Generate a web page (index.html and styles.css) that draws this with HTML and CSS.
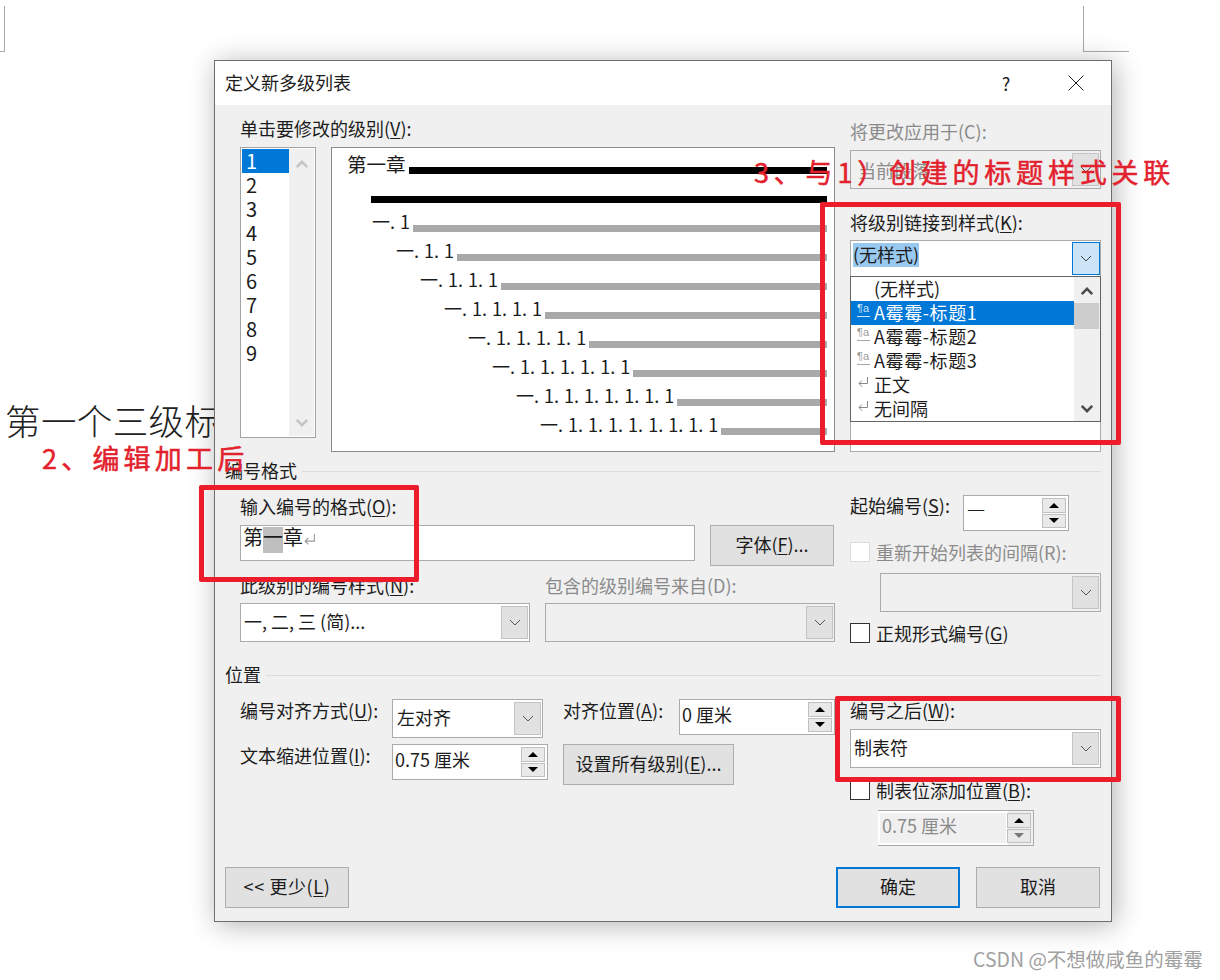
FILE: index.html
```html
<!DOCTYPE html>
<html lang="zh-CN">
<head>
<meta charset="utf-8">
<title>定义新多级列表</title>
<link rel="stylesheet" href="styles.css">
</head>
<body>
<svg class="defs" width="0" height="0" aria-hidden="true">
  <symbol id="chev" viewBox="0 0 12 7"><path d="M1 1l5 5 5-5" fill="none" stroke="currentColor" stroke-width="1"/></symbol>
  <symbol id="chevb" viewBox="0 0 16 10"><path d="M2 8l6-6 6 6" fill="none" stroke="currentColor" stroke-width="3"/></symbol>
  <symbol id="ret" viewBox="0 0 12 12"><path d="M10.5 1v6.500H2M5 4.500L2 7.500l3 3" fill="none" stroke="currentColor" stroke-width="1"/></symbol>
</svg>

<main class="desk">
  <div class="mark mark-left"></div>
  <div class="mark mark-right"></div>
  <p class="doc-text">第一个三级标题</p>

  <section class="dialog">
    <header class="titlebar">
      <h1 class="title">定义新多级列表</h1>
      <span class="help">?</span>
      <svg class="close" viewBox="0 0 16 16"><path d="M.5.500l15 15M15.500.500l-15 15" stroke="#222" stroke-width="1" fill="none"/></svg>
    </header>

    <div class="body">
      <div class="cols top">
        <div class="col-a">
          <label class="lbl lbl-levels">单击要修改的级别(<u>V</u>):</label>
          <div class="levels">
            <div class="listbox">
              <ul class="nums">
                <li class="sel">1</li><li>2</li><li>3</li><li>4</li><li>5</li><li>6</li><li>7</li><li>8</li><li>9</li>
              </ul>
              <div class="lb-scroll">
                <svg class="sb-ar"><use href="#chevb"/></svg>
                <svg class="sb-ar"><use href="#chevb"/></svg>
              </div>
            </div>
            <div class="preview">
              <div class="pv lv1"><span class="num">第一章</span><i class="bar black"></i></div>
              <div class="pv lv2"><span class="num"></span><i class="bar black"></i></div>
              <div class="pv lv3"><span class="num">一. 1</span><i class="bar"></i></div>
              <div class="pv lv4"><span class="num">一. 1. 1</span><i class="bar"></i></div>
              <div class="pv lv5"><span class="num">一. 1. 1. 1</span><i class="bar"></i></div>
              <div class="pv lv6"><span class="num">一. 1. 1. 1. 1</span><i class="bar"></i></div>
              <div class="pv lv7"><span class="num">一. 1. 1. 1. 1. 1</span><i class="bar"></i></div>
              <div class="pv lv8"><span class="num">一. 1. 1. 1. 1. 1. 1</span><i class="bar"></i></div>
              <div class="pv lv9"><span class="num">一. 1. 1. 1. 1. 1. 1. 1</span><i class="bar"></i></div>
              <div class="pv lv10"><span class="num">一. 1. 1. 1. 1. 1. 1. 1. 1</span><i class="bar"></i></div>
            </div>
          </div>
        </div>
        <div class="col-b">
          <label class="lbl off lbl-apply">将更改应用于(C):</label>
          <div class="combo disabled apply">
            <span class="c-text off">当前段落</span>
            <span class="c-btn"><svg class="chev"><use href="#chev"/></svg></span>
          </div>
          <label class="lbl lbl-link">将级别链接到样式(<u>K</u>):</label>
          <div class="linkbox">
            <div class="combo open">
              <span class="c-text"><span class="hl">(无样式)</span></span>
              <span class="c-btn"><svg class="chev"><use href="#chev"/></svg></span>
            </div>
            <div class="under"></div>
            <div class="dropdown">
              <ul class="styles">
                <li><span class="ic"></span>(无样式)</li>
                <li class="sel st"><span class="ic"><span class="pa">¶a</span></span>A霉霉-标题1</li>
                <li class="st"><span class="ic"><span class="pa">¶a</span></span>A霉霉-标题2</li>
                <li class="st"><span class="ic"><span class="pa">¶a</span></span>A霉霉-标题3</li>
                <li><span class="ic"><svg class="ret"><use href="#ret"/></svg></span>正文</li>
                <li><span class="ic"><svg class="ret"><use href="#ret"/></svg></span>无间隔</li>
              </ul>
              <div class="dd-scroll">
                <svg class="dd-ar"><use href="#chevb"/></svg>
                <span class="thumb"></span>
                <svg class="dd-ar down"><use href="#chevb"/></svg>
              </div>
            </div>
          </div>
        </div>
      </div>

      <div class="group"><span>编号格式</span><i></i></div>

      <div class="cols fmt">
        <div class="col-a">
          <label class="lbl lbl-fmt">输入编号的格式(<u>O</u>):</label>
          <div class="fmt-row">
            <div class="input"><span>第</span><span class="field">一</span><span>章</span><svg class="ret in"><use href="#ret"/></svg></div>
            <button class="btn btn-font">字体(<u>F</u>)...</button>
          </div>
          <div class="two">
            <div>
              <label class="lbl">此级别的编号样式(<u>N</u>):</label>
              <div class="combo"><span class="c-text">一, 二, 三 (简)...</span><span class="c-btn"><svg class="chev"><use href="#chev"/></svg></span></div>
            </div>
            <div>
              <label class="lbl off">包含的级别编号来自(D):</label>
              <div class="combo disabled"><span class="c-text"></span><span class="c-btn"><svg class="chev"><use href="#chev"/></svg></span></div>
            </div>
          </div>
        </div>
        <div class="col-b">
          <div class="start-row">
            <label class="lbl">起始编号(<u>S</u>):</label>
            <div class="spin w-start"><span class="s-text thin">一</span><span class="s-btns"><b class="up"></b><b class="dn"></b></span></div>
          </div>
          <div class="check check-off"><span class="box"></span><span class="off">重新开始列表的间隔(R):</span></div>
          <div class="combo disabled restart"><span class="c-text"></span><span class="c-btn"><svg class="chev"><use href="#chev"/></svg></span></div>
          <div class="check legal"><span class="box"></span><span>正规形式编号(<u>G</u>)</span></div>
        </div>
      </div>

      <div class="group pos"><span>位置</span><i></i></div>

      <div class="cols posn">
        <div class="col-a pos-grid">
          <label class="lbl">编号对齐方式(<u>U</u>):</label>
          <div class="combo short"><span class="c-text low">左对齐</span><span class="c-btn"><svg class="chev"><use href="#chev"/></svg></span></div>
          <div class="align-at">
            <label class="lbl">对齐位置(<u>A</u>):</label>
            <div class="spin w-val"><span class="s-text">0 厘米</span><span class="s-btns"><b class="up"></b><b class="dn"></b></span></div>
          </div>
          <label class="lbl">文本缩进位置(<u>I</u>):</label>
          <div class="spin w-val"><span class="s-text">0.75 厘米</span><span class="s-btns"><b class="up"></b><b class="dn"></b></span></div>
          <div><button class="btn btn-all">设置所有级别(<u>E</u>)...</button></div>
        </div>
        <div class="col-b after">
          <label class="lbl lbl-after">编号之后(<u>W</u>):</label>
          <div class="combo"><span class="c-text">制表符</span><span class="c-btn"><svg class="chev"><use href="#chev"/></svg></span></div>
          <div class="check tabstop"><span class="box"></span><span>制表位添加位置(<u>B</u>):</span></div>
          <div class="spin w-val tabval disabled"><span class="s-text off">0.75 厘米</span><span class="s-btns"><b class="up"></b><b class="dn dim"></b></span></div>
        </div>
      </div>

      <footer class="foot">
        <button class="btn btn-foot less">&lt;&lt; 更少(<u>L</u>)</button>
        <div class="foot-right">
          <button class="btn btn-foot primary">确定</button>
          <button class="btn btn-foot">取消</button>
        </div>
      </footer>
    </div>
  </section>

  <div class="rect rect-link"></div>
  <div class="rect rect-fmt"></div>
  <div class="rect rect-after"></div>
  <p class="note note-3">3、与1）创建的标题样式关联</p>
  <p class="note note-2">2、编辑加工后</p>
  <p class="watermark">CSDN @不想做咸鱼的霉霉</p>
</main>
</body>
</html>
```

FILE: styles.css
```css
* { box-sizing: border-box; }
html, body { margin: 0; padding: 0; background: #fff; }
body { font: 18px/24px "Noto Sans CJK SC", "Noto Sans", sans-serif; color: #1c1c1c; overflow: hidden; }
.defs { position: absolute; }
ul { list-style: none; margin: 0; padding: 0; }
u { text-underline-offset: 2px; text-decoration-thickness: 1px; }
.desk { position: relative; width: 1220px; height: 980px; overflow: hidden; }

/* page behind the dialog */
.mark { position: absolute; top: 6px; height: 46px; border-bottom: 1px solid #aaa; }
.mark-left { left: 0; width: 5px; border-right: 1px solid #aaa; }
.mark-right { left: 1083px; width: 46px; border-left: 1px solid #aaa; }
.doc-text { position: absolute; left: 5px; top: 396px; margin: 0; font-size: 35.500px; line-height: 48px; font-weight: 300; white-space: nowrap; color: #222; letter-spacing: .4px; }

/* dialog */
.dialog { position: absolute; left: 214px; top: 60px; width: 898px; height: 862px; border: 1px solid #6e6e6e; background: #f0f0f0; box-shadow: 3px 3px 26px rgba(0,0,0,.3); display: flex; flex-direction: column; }
.titlebar { height: 44px; background: #fff; display: flex; align-items: center; padding-left: 10px; flex: none; }
.title { margin: 0; font-size: 18px; font-weight: 400; line-height: 42px; height: 44px; flex: 1; }
.help { font-size: 18px; width: 20px; margin-right: 52px; text-align: center; }
.close { width: 16px; height: 16px; margin-right: 27px; }
.body { flex: 1; display: flex; flex-direction: column; padding: 13px 10px 13px 25px; }

.cols { display: grid; grid-template-columns: 595px 251px; column-gap: 15px; }
.lbl { display: block; white-space: nowrap; line-height: 20px; padding-bottom: 4px; }
.off { color: #8b8b8b; }

/* top */
.lbl-levels { margin-bottom: 5px; }
.levels { display: flex; gap: 15px; }
.listbox { width: 76px; height: 291px; border: 1px solid #a3a3a3; background: #fff; display: flex; padding: 1px; }
.nums { width: 47px; }
.nums li { height: 24px; line-height: 23px; padding-left: 4px; font-size: 20px; }
.nums li.sel { background: #0078d7; color: #fff; }
.lb-scroll { flex: 1; background: #f0f0f0; display: flex; flex-direction: column; justify-content: space-between; align-items: center; padding: 11px 0 9px; }
.sb-ar { width: 14px; height: 9px; color: #c4c4c4; }
.sb-ar + .sb-ar { transform: scaleY(-1); }

.preview { width: 504px; height: 305px; border: 1px solid #8a8a8a; background: #fff; padding: 2px 7px 0 0; }
.pv { height: 29px; display: flex; white-space: nowrap; }
.num { flex: none; line-height: 27px; word-spacing: 1px; }
.lv1 .num { font-size: 19.500px; line-height: 28px; }
.bar { flex: 1; height: 7px; margin-top: 17px; background: #a9a9a9; }
.bar.black { background: #000; }
.lv1 { padding-left: 15px; } .lv1 .num { width: 62px; }
.lv2 { padding-left: 39px; } .lv2 .num { width: 0; }
.lv3 { padding-left: 40px; } .lv3 .num { width: 41px; }
.lv4 { padding-left: 64px; } .lv4 .num { width: 61px; }
.lv5 { padding-left: 88px; } .lv5 .num { width: 81px; }
.lv6 { padding-left: 112px; } .lv6 .num { width: 101px; }
.lv7 { padding-left: 136px; } .lv7 .num { width: 121px; }
.lv8 { padding-left: 160px; } .lv8 .num { width: 141px; }
.lv9 { padding-left: 184px; } .lv9 .num { width: 161px; }
.lv10 { padding-left: 208px; } .lv10 .num { width: 181px; }

/* combos */
.combo { height: 39px; border: 1px solid #ababab; background: #fff; display: flex; padding: 2px 1px 2px 0; }
.c-text { flex: 1; padding-left: 3px; line-height: 31px; white-space: nowrap; overflow: hidden; }
.c-text.low { line-height: 31px; padding-left: 4px; }
.c-btn { width: 27px; background: #e1e1e1; border: 1px solid #c4c4c4; display: flex; align-items: center; justify-content: center; color: #555; }
.chev { width: 12px; height: 7px; }
.combo.disabled { background: #f0f0f0; }
.lbl-apply { margin: 3px 0 5px; }
.apply .c-text { padding-left: 7px; line-height: 35px; }
.lbl-link { margin: 23px 0 4px; }
.linkbox { position: relative; height: 212px; }
.combo.open { height: 37px; padding: 1px 0; }
.combo.open .c-text { padding: 1px 0 0 2px; display: block; }
.hl { display: block; width: fit-content; background: #99c9ef; height: 24px; line-height: 22px; }
.combo.open .c-btn { border-color: #0078d7; background: #cce4f7; color: #444; width: 28px; }
.under { height: 175px; border: 1px solid #ababab; border-top: 0; background: #fff; }
.dropdown { position: absolute; left: 0; top: 36px; width: 251px; height: 146px; border: 1px solid #646464; background: #fff; display: flex; }
.styles { width: 223px; }
.styles li { height: 24px; line-height: 22px; display: flex; white-space: nowrap; }
.styles li.st { letter-spacing: .6px; }
.styles li.sel { background: #0078d7; color: #fff; }
.ic { width: 23px; flex: none; padding-left: 6px; display: block; letter-spacing: 0; }
.pa { display: block; width: 13px; height: 16px; font: 11px/14px "Liberation Sans", sans-serif; color: #9a9a9a; border-bottom: 1px solid #a8a8a8; }
.styles li.sel .pa { color: #cfe4f7; border-bottom-color: #cfe4f7; }
.ret { width: 12px; height: 12px; color: #888; display: block; margin-top: 3px; }
.dd-scroll { flex: 1; background: #f0f0f0; position: relative; display: flex; flex-direction: column; align-items: center; padding-top: 10px; }
.dd-ar { width: 14px; height: 9px; color: #4d4d4d; }
.thumb { position: absolute; left: 0; right: 1px; top: 26px; height: 26px; background: #cdcdcd; }
.dd-ar.down { position: absolute; bottom: 8px; transform: scaleY(-1); }

/* group header */
.group { display: flex; align-items: center; gap: 5px; margin: 8px 0 0 -15px; height: 24px; }
.group span { line-height: 20px; padding-bottom: 4px; }
.group i { flex: 1; height: 1px; background: #dcdcdc; margin-top: -2px; }
.group.pos { margin-top: 21px; }

/* number format */
.lbl-fmt { margin: 12px 0 5px; }
.fmt-row { display: flex; gap: 15px; align-items: flex-start; }
.input { width: 455px; height: 36px; border: 1px solid #ababab; background: #fff; display: flex; align-items: flex-start; padding: 1px 0 0 2px; line-height: 20px; font-size: 20px; }
.field { background: #bfbfbf; width: 20px; height: 26px; text-align: center; }
.ret.in { margin: 6px 0 0 0; color: #999; width: 13px; height: 13px; }
.btn { font: inherit; color: inherit; background: #e1e1e1; border: 1px solid #adadad; padding: 0 0 3px; white-space: nowrap; }
.btn-font { width: 124px; height: 41px; }
.two { display: grid; grid-template-columns: 290px 290px; column-gap: 15px; margin-top: 9px; }
.two .lbl { margin-bottom: 4px; }

.start-row { display: flex; margin-top: 11px; }
.start-row .lbl { width: 113px; }
.spin { height: 36px; border: 1px solid #ababab; background: #fff; display: flex; padding: 2px 2px 2px 0; }
.s-text { flex: 1; padding-left: 2px; line-height: 25px; white-space: nowrap; }
.s-text.thin { font-weight: 300; padding-left: 3px; }
.s-btns { width: 24px; display: flex; flex-direction: column; gap: 1px; }
.s-btns b { flex: 1; background: #e9e9e9; border: 1px solid #c0c0c0; display: flex; align-items: center; justify-content: center; }
.s-btns b::before { content: ""; border-left: 5px solid transparent; border-right: 5px solid transparent; }
.s-btns .up::before { border-bottom: 5px solid #000; }
.s-btns .dn::before { border-top: 5px solid #000; }
.s-btns .dn.dim::before { border-top-color: #7a7a7a; }
.w-start { width: 106px; }
.w-val { width: 156px; }
.check { display: flex; align-items: center; gap: 6px; height: 20px; white-space: nowrap; }
.box { width: 20px; height: 20px; border: 1px solid #333; background: #fff; flex: none; }
.check-off { margin-top: 11px; }
.check-off .box { border-color: #dcdcdc; }
.restart { margin: 11px 0 0 30px; width: 221px; }
.legal { margin-top: 11px; }

/* position */
.pos-grid { display: grid; grid-template-columns: 152px 156px 287px; column-gap: 0; row-gap: 6px; margin-top: 11px; grid-template-rows: 39px 41px; }
.pos-grid > :nth-child(3), .pos-grid > :nth-child(6) { margin-left: 15px; }
.pos-grid > .lbl { margin-top: 1px; }
.short { width: 151px; }
.align-at { display: flex; }
.align-at .lbl { width: 116px; margin-top: 1px; }
.align-at .spin { width: 156px; }
.btn-all { width: 171px; height: 41px; }
.lbl-after { margin: 12px 0 5px; }
.tabstop { margin-top: 12px; }
.tabval { margin: 10px 0 0 28px; height: 36px; background: #f0f0f0; }
.tabval .s-text { background: #f0f0f0; box-shadow: 0 0 0 2px #fff; margin: 0 1px; }

/* footer */
.foot { margin-top: auto; margin-left: -15px; padding-right: 1px; display: flex; justify-content: space-between; }
.foot-right { display: flex; gap: 16px; }
.btn-foot { width: 124px; height: 41px; }
.btn-foot.less { letter-spacing: .6px; }
.btn-foot.primary { border: 2px solid #0078d7; }

/* annotations */
.rect { position: absolute; border: 5px solid #ec1c2a; border-radius: 2px; }
.rect-link { left: 820px; top: 202px; width: 301px; height: 243px; }
.rect-fmt { left: 199px; top: 485px; width: 220px; height: 97px; }
.rect-after { left: 835px; top: 696px; width: 286px; height: 86px; }
.note { position: absolute; margin: 0; color: #e3212d; white-space: nowrap; font-size: 27px; font-weight: 400; -webkit-text-stroke: .5px #e3212d; line-height: 32px; }
.note-3 { left: 754px; top: 156px; letter-spacing: 4.800px; }
.note-2 { left: 42px; top: 442px; letter-spacing: 4.200px; }
.watermark { position: absolute; left: 973px; top: 947px; margin: 0; font-size: 19.500px; color: #a0a0a0; white-space: nowrap; }
```
